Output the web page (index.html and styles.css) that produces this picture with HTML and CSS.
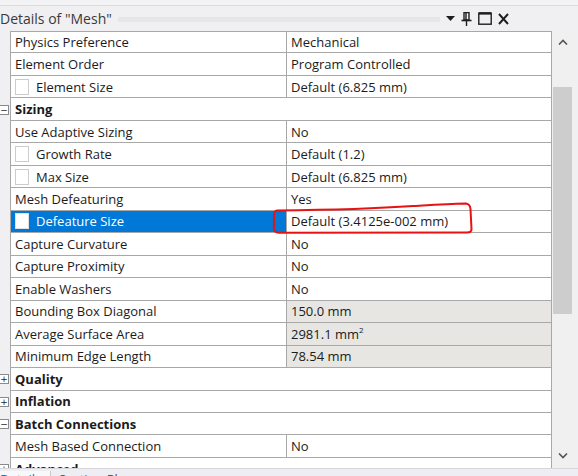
FILE: index.html
```html
<!DOCTYPE html>
<html lang="en">
<head>
    <meta charset="UTF-8">
    <title>Details of "Mesh"</title>
    <link rel="stylesheet" href="styles.css">
</head>
<body>

<div class="top-strip"></div>

<div class="titlebar">
    <span class="title">Details of "Mesh"</span>
    <span class="grip"></span>
    <span class="tools">
        <svg width="9" height="5" viewBox="0 0 9 5"><path d="M0 0 H9 L4.5 5 Z" fill="#1e1e1e"/></svg>
        <svg width="11" height="14" viewBox="0 0 11 14"><path d="M3 0.5 H8 V8 H3 Z M5 1 V8" fill="none" stroke="#1e1e1e" stroke-width="1.4"/><path d="M0.5 8.5 H10.5" stroke="#1e1e1e" stroke-width="1.6"/><path d="M5.5 9 V14" stroke="#1e1e1e" stroke-width="1.4"/></svg>
        <svg width="14" height="13" viewBox="0 0 14 13"><rect x="0.8" y="1.2" width="12.4" height="11" fill="none" stroke="#1e1e1e" stroke-width="1.4"/><path d="M0.8 1.4 H13.2" stroke="#1e1e1e" stroke-width="2.4"/></svg>
        <svg width="11" height="12" viewBox="0 0 11 12"><path d="M1 1 L10 11 M10 1 L1 11" stroke="#1e1e1e" stroke-width="1.9"/></svg>
    </span>
</div>

<div class="panel">
    <div class="grid">
        <div class="row"><div class="gut"></div><div class="name">Physics Preference</div><div class="val">Mechanical</div></div>
        <div class="row"><div class="gut"></div><div class="name">Element Order</div><div class="val">Program Controlled</div></div>
        <div class="row"><div class="gut"></div><div class="name"><span class="check"></span>Element Size</div><div class="val">Default (6.825 mm)</div></div>
        <div class="row group"><div class="gut"><span class="tog">&minus;</span></div><div class="name">Sizing</div></div>
        <div class="row"><div class="gut"></div><div class="name">Use Adaptive Sizing</div><div class="val">No</div></div>
        <div class="row"><div class="gut"></div><div class="name"><span class="check"></span>Growth Rate</div><div class="val">Default (1.2)</div></div>
        <div class="row"><div class="gut"></div><div class="name"><span class="check"></span>Max Size</div><div class="val">Default (6.825 mm)</div></div>
        <div class="row"><div class="gut"></div><div class="name">Mesh Defeaturing</div><div class="val">Yes</div></div>
        <div class="row selected"><div class="gut"></div><div class="name"><span class="check"></span>Defeature Size</div><div class="val">Default (3.4125e-002 mm)</div></div>
        <div class="row"><div class="gut"></div><div class="name">Capture Curvature</div><div class="val">No</div></div>
        <div class="row"><div class="gut"></div><div class="name">Capture Proximity</div><div class="val">No</div></div>
        <div class="row"><div class="gut"></div><div class="name">Enable Washers</div><div class="val">No</div></div>
        <div class="row readonly"><div class="gut"></div><div class="name">Bounding Box Diagonal</div><div class="val">150.0 mm</div></div>
        <div class="row readonly"><div class="gut"></div><div class="name">Average Surface Area</div><div class="val"><span>2981.1 mm<sup>2</sup></span></div></div>
        <div class="row readonly"><div class="gut"></div><div class="name">Minimum Edge Length</div><div class="val">78.54 mm</div></div>
        <div class="row group"><div class="gut"><span class="tog">+</span></div><div class="name">Quality</div></div>
        <div class="row group"><div class="gut"><span class="tog">+</span></div><div class="name">Inflation</div></div>
        <div class="row group"><div class="gut"><span class="tog">&minus;</span></div><div class="name">Batch Connections</div></div>
        <div class="row"><div class="gut"></div><div class="name">Mesh Based Connection</div><div class="val">No</div></div>
        <div class="row group"><div class="gut"><span class="tog">+</span></div><div class="name">Advanced</div></div>
    </div>

    <div class="scroll">
        <svg class="arrow" width="10" height="6" viewBox="0 0 10 6"><path d="M1 5.5 L5 1.5 L9 5.5" fill="none" stroke="#555" stroke-width="1.6"/></svg>
        <div class="track"><div class="thumb"></div></div>
        <svg class="arrow" width="10" height="6" viewBox="0 0 10 6"><path d="M1 0.5 L5 4.5 L9 0.5" fill="none" stroke="#555" stroke-width="1.6"/></svg>
    </div>

    <svg class="mark" width="578" height="437" viewBox="0 31 578 437">
        <path d="M277 210.5 C 320 210, 370 209, 413 206 C 440 204.5, 455 203.5, 466 203.5 Q 470 204, 470.5 209 L 471.5 229 Q 471.5 232.5, 467 232.5 L 279 232.8 Q 274 232.5, 273.8 228 L 274 215 Q 274 211, 277 210.5"
              fill="none" stroke="#e81212" stroke-width="2"/>
    </svg>
</div>

<div class="tabs">
    <span class="tab active">Details</span>
    <span class="tab">Section Planes</span>
</div>

</body>
</html>
```

FILE: styles.css
```css
body {
    margin: 0;
    width: 578px;
    height: 476px;
    overflow: hidden;
    background-color: #f0f0f2;
    font-family: "Open Sans", "Noto Sans", sans-serif;
    font-size: 13px;
    color: #1b1b1b;
}
.top-strip {
    height: 5px;
    border-bottom: 1px solid #dcdbe3;
    background-color: #f3f3f5;
}
.titlebar {
    display: flex;
    align-items: center;
    height: 25px;
}
.title {
    font-size: 14px;
    color: #3a3a3a;
    white-space: nowrap;
}
.grip {
    flex: 1;
    height: 5px;
    margin: 1px 6px 0 6px;
    background-image: radial-gradient(circle, #cfcfd6 0.5px, transparent 0.8px);
    background-size: 2px 2px;
}
.tools {
    display: flex;
    align-items: center;
    gap: 6px;
    margin-right: 69px;
}
.panel {
    position: relative;
    display: flex;
    height: 437px;
    overflow: hidden;
}
.grid {
    width: 552px;
}
.row {
    display: grid;
    grid-template-columns: 10px 276px 266px;
    height: 22.47px;
    box-sizing: border-box;
}
.row:first-child .name,
.row:first-child .val {
    border-top: 1px solid #a8a8a8;
}
.gut {
    display: flex;
    align-items: center;
}
.name, .val {
    display: flex;
    align-items: center;
    box-sizing: border-box;
    background-color: #ffffff;
    border-bottom: 1px solid #a8a8a8;
    white-space: nowrap;
}
.name {
    border-left: 1px solid #a8a8a8;
    padding-left: 4px;
}
.val {
    border-left: 1px solid #a8a8a8;
    border-right: 1px solid #a8a8a8;
    padding-left: 4px;
}
.group .name {
    grid-column: 2 / 4;
    font-weight: bold;
    border-right: 1px solid #a8a8a8;
}
.readonly .val {
    background-color: #e7e6e2;
}
.selected .name {
    background-color: #0078d7;
    color: #ffffff;
}
.selected .check {
    border-color: #e0e0e0;
}
.check {
    width: 12px;
    height: 14px;
    border: 1px solid #cccccc;
    background-color: #ffffff;
    margin-right: 7px;
}
sup {
    font-size: 8px;
    vertical-align: 6px;
    line-height: 0;
}
.tog {
    width: 8px;
    height: 8px;
    margin-left: -1px;
    border: 1px solid #8a8a8a;
    background-color: #ffffff;
    font-size: 9px;
    line-height: 8px;
    text-align: center;
    color: #222;
    font-family: "DejaVu Sans", sans-serif;
}
.scroll {
    width: 21px;
    display: flex;
    flex-direction: column;
    align-items: center;
    background-color: #f0f0f0;
    padding-top: 8px;
}
.track {
    width: 19px;
    height: 280px;
}
.thumb {
    margin-top: 42px;
    height: 227px;
    background-color: #cdcdcd;
}
.scroll .arrow:last-child {
    margin-top: 128px;
}
.mark {
    position: absolute;
    left: 0;
    top: 0;
    pointer-events: none;
}
.tabs {
    display: flex;
    height: 8px;
    background-color: #eeeef2;
    border-top: 1px solid #d6d6dc;
    font-size: 13px;
    line-height: 16px;
    padding-top: 2px;
    overflow: hidden;
}
.tab {
    padding: 0 8px 0 0;
    color: #555;
}
.tab.active {
    color: #1a73c9;
    background-color: #f8f8fa;
    width: 42px;
    border-right: 1px solid #c8c8cc;
    margin-right: 8px;
}
```
